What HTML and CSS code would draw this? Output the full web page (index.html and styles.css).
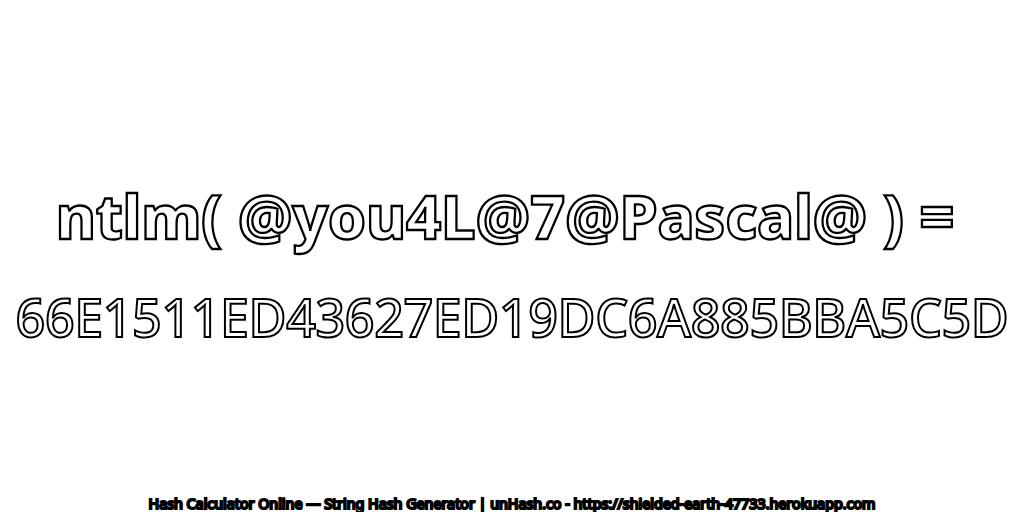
FILE: index.html
```html
<!DOCTYPE html>
<html lang="en">
<head>
<meta charset="utf-8">
<title>unHash</title>
<link rel="stylesheet" href="styles.css">
</head>
<body>
<main class="page">
  <div class="hero">
    <h1 class="line title">ntlm( @you4L@7@Pascal@ ) =</h1>
    <h2 class="line digest">66E1511ED43627ED19DC6A885BBA5C5D</h2>
  </div>
  <footer class="foot">Hash Calculator Online — String Hash Generator | unHash.co - https://shielded-earth-47733.herokuapp.com</footer>
</main>
</body>
</html>
```
FILE: styles.css
```css
html, body { margin: 0; padding: 0; background: #fff; }
.page { width: 1024px; height: 512px; display: flex; flex-direction: column; overflow: hidden; font-family: "Noto Sans", "DejaVu Sans", sans-serif; }
.hero { flex: 1; display: flex; flex-direction: column; justify-content: center; align-items: center; gap: 28px; padding-top: 31px; }
.line { margin: 0; color: #fff; white-space: nowrap; -webkit-text-stroke: 2px #000; }
.title { font-size: 61px; line-height: 80px; font-weight: 800; margin-right: 14px; letter-spacing: -0.25px; -webkit-text-stroke-width: 2.3px; }
.digest { font-size: 52px; line-height: 66px; font-weight: 500; letter-spacing: -0.42px; }
.foot { font-size: 14.3px; line-height: 17px; font-weight: 400; text-align: center; color: #fff; -webkit-text-stroke: 2.2px #000; white-space: nowrap; }
```
